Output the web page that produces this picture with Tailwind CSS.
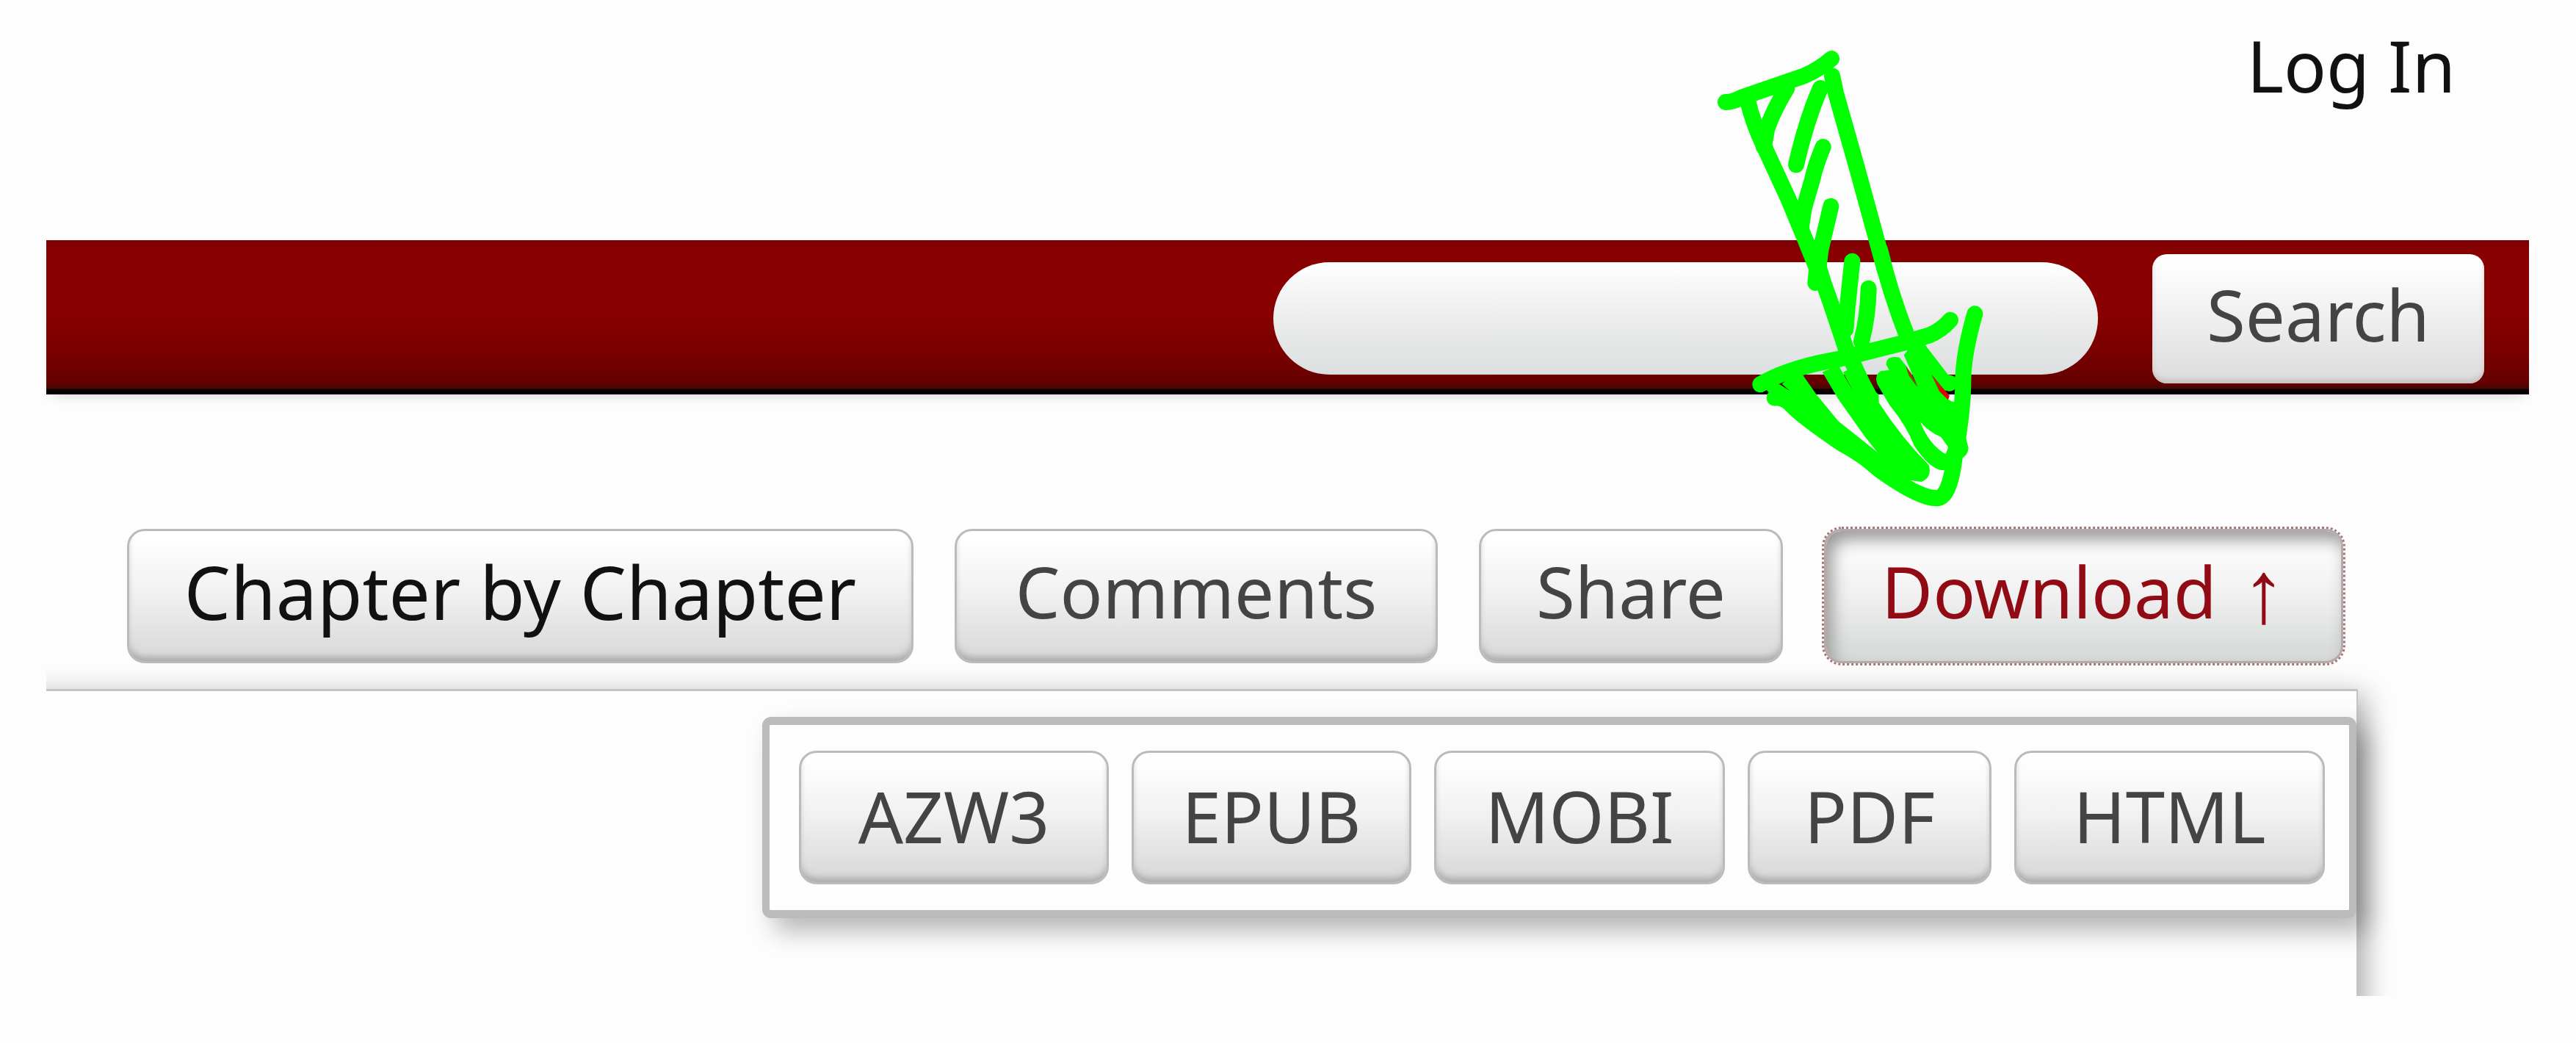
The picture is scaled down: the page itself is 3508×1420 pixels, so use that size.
<!DOCTYPE html>
<html lang="en">
<head>
<meta charset="utf-8">
<title>Work downloads</title>
<script src="https://cdn.jsdelivr.net/npm/@tailwindcss/browser@4"></script>
</head>
<body class="relative bg-[#fdfdfd] font-['Noto_Sans','Open_Sans',sans-serif] text-[96px] leading-none text-[#444] overflow-x-hidden">
  <nav class="flex h-[327px] justify-end pr-[164px] pt-[41px]">
    <a href="#login" class="h-[96px] text-[#111]">Log In</a>
  </nav>

  <header class="ml-[63px] mr-[64px] bg-linear-[to_bottom,#7c0004_0%,#880000_8%,#880000_45%,#7c0000_70%,#640000_93%,#420804_96%,#0a0000_97%,#000_100%] shadow-[0_10px_14px_-8px_rgba(0,0,0,0.15)]">
    <form class="flex h-[210px] items-center justify-end gap-[74px] pr-[61px] pt-[3px]">
      <input type="text" aria-label="Search works" class="h-[153px] w-[1123px] rounded-full bg-linear-to-b from-white via-[#ececec] to-[#dcdfe0] px-12 outline-none">
      <button type="button" class="h-[176px] w-[452px] rounded-[20px] bg-linear-to-b from-white from-5% via-[#ededed] via-55% to-[#dcdcde] pb-[12px] shadow-[inset_0_-6px_8px_-2px_#c8bcb8]">Search</button>
    </form>
  </header>

  <main class="ml-[63px] overflow-hidden">
    <div class="flex justify-end gap-[56px] pt-[183px] pr-[317px] pb-[35px]">
      <button type="button" class="h-[183px] w-[1071px] rounded-[24px] border-[3px] border-[#bbb] bg-linear-to-b from-white from-5% via-[#f0f0f0] via-50% to-[#dcdcdc] to-90% pb-[14px] text-[100px] text-[#111] shadow-[inset_0_-9px_10px_-3px_#aaa]">Chapter by Chapter</button>
      <button type="button" class="h-[183px] w-[658px] rounded-[24px] border-[3px] border-[#bbb] bg-linear-to-b from-white from-5% via-[#f0f0f0] via-50% to-[#dcdcdc] to-90% pb-[14px] shadow-[inset_0_-9px_10px_-3px_#aaa]">Comments</button>
      <button type="button" class="h-[183px] w-[414px] rounded-[24px] border-[3px] border-[#bbb] bg-linear-to-b from-white from-5% via-[#f0f0f0] via-50% to-[#dcdcdc] to-90% pb-[14px] shadow-[inset_0_-9px_10px_-3px_#aaa]">Share</button>
      <button type="button" aria-expanded="true" class="flex h-[183px] w-[707px] items-center justify-center gap-[34px] rounded-[24px] border-[3px] border-[#b5a9a9] bg-linear-to-b from-white from-5% via-[#f0f0f0] via-50% to-[#dadcdc] to-90% pb-[14px] text-[#900b14] shadow-[inset_8px_12px_22px_#999] outline-[3px] outline-dotted outline-[#a07878]"><span>Download</span><span class="font-['Liberation_Sans',sans-serif] text-[120px]">↑</span></button>
    </div>

    <section class="-mb-[80px] -ml-[80px] mr-[297px] border-t-[3px] border-r-2 border-[#c4c4c4] bg-[#fdfdfd] pt-[35px] pb-[186px] shadow-[10px_8px_35px_rgba(0,0,0,0.32)]">
      <ul class="ml-auto flex w-fit gap-[31px] rounded-[12px] border-y-[11px] border-x-[10px] border-[#bbb] bg-[#fdfdfd] py-[35px] pr-[33px] pl-[40px] shadow-[16px_18px_34px_rgba(0,0,0,0.28)]">
        <li><a href="#azw3" class="flex h-[182px] w-[422px] items-center justify-center rounded-[24px] border-[3px] border-[#bbb] bg-linear-to-b from-white from-5% via-[#f0f0f0] via-50% to-[#dcdcdc] to-90% pb-[4px] shadow-[inset_0_-9px_10px_-3px_#aaa]">AZW3</a></li>
        <li><a href="#epub" class="flex h-[182px] w-[381px] items-center justify-center rounded-[24px] border-[3px] border-[#bbb] bg-linear-to-b from-white from-5% via-[#f0f0f0] via-50% to-[#dcdcdc] to-90% pb-[4px] shadow-[inset_0_-9px_10px_-3px_#aaa]">EPUB</a></li>
        <li><a href="#mobi" class="flex h-[182px] w-[396px] items-center justify-center rounded-[24px] border-[3px] border-[#bbb] bg-linear-to-b from-white from-5% via-[#f0f0f0] via-50% to-[#dcdcdc] to-90% pb-[4px] shadow-[inset_0_-9px_10px_-3px_#aaa]">MOBI</a></li>
        <li><a href="#pdf" class="flex h-[182px] w-[332px] items-center justify-center rounded-[24px] border-[3px] border-[#bbb] bg-linear-to-b from-white from-5% via-[#f0f0f0] via-50% to-[#dcdcdc] to-90% pb-[4px] shadow-[inset_0_-9px_10px_-3px_#aaa]">PDF</a></li>
        <li><a href="#html" class="flex h-[182px] w-[423px] items-center justify-center rounded-[24px] border-[3px] border-[#bbb] bg-linear-to-b from-white from-5% via-[#f0f0f0] via-50% to-[#dcdcdc] to-90% pb-[4px] shadow-[inset_0_-9px_10px_-3px_#aaa]">HTML</a></li>
      </ul>
    </section>
  </main>

  <!-- Hand-drawn arrow pointing at the Download button -->
  <svg class="pointer-events-none absolute top-0 right-[748px] h-[720px] w-[460px]" viewBox="0 0 1380 2160" fill="none" stroke="#00ff00" stroke-width="66" stroke-linecap="round" stroke-linejoin="round" aria-hidden="true">
    <g transform="translate(0 120)">
      <path d="M150 297Q180 297 215 278L470 190Q530 165 582 120"/>
      <path d="M240 290Q260 380 308 480L405 690L476 860L520 970"/>
      <path d="M585 190L600 260L685 560L767 860L800 980"/>
      <path d="M400 240Q340 340 318 410L306 480"/>
      <path d="M537 240Q480 370 438 553"/>
      <path d="M548 480Q515 560 505 610L470 730L458 810"/>
      <path d="M580 722L538 900L527 990"/>
    </g>
    <g transform="translate(180 1020)">
      <path d="M335 20L368 130L398 215L460 400L530 550L560 605"/>
      <path d="M345 60L337 135"/>
      <path d="M600 0Q640 170 710 350L770 440L850 620"/>
      <path d="M487 47L468 230L460 325"/>
      <path d="M554 158Q552 270 525 375"/>
      <path d="M112 550Q230 480 440 445L690 382L800 350Q850 330 888 287"/>
      <path d="M988 262Q940 430 940 540Q940 660 905 850Q885 1015 832 1015Q760 1015 600 900Q520 830 450 795Q280 680 240 635Q210 600 170 605"/>
      <path d="M740 385L860 540L885 545"/>
      <g stroke="none" fill="#00ff00">
        <path d="M110 540L190 550L232 576L200 548L270 490L340 590L430 700L590 827L680 960L600 925L400 800L190 635Z"/>
        <path d="M365 500L430 470L490 578L450 500L520 465L565 570L595 590L596 625Q690 770 800 880Q815 930 770 948L600 925L590 827L540 765L430 610Z"/>
        <path fill-rule="evenodd" d="M626 470Q625 430 680 440L710 478L755 560L698 430L740 380L820 440L890 560L815 515L890 610L920 640L962 810Q960 840 930 855L905 900H850Q800 890 740 800Q710 720 640 635L590 550Q575 510 605 495L638 492ZM765 703Q800 795 868 835L880 808L850 765Q800 745 765 703Z"/>
      </g>
      <path fill="#8b4200" stroke="none" d="M705 474L728 505L753 562L718 513Z"/>
      <path fill="#b52900" stroke="none" d="M810 508L887 600L878 612L842 577Z"/>
      <path fill="#e60000" stroke="none" d="M850 558L887 600L878 612L845 579Z"/>
      <path fill="#fdfdfd" stroke="none" d="M884 596L900 591L898 622L880 612Z"/>
    </g>
  </svg>
</body>
</html>
